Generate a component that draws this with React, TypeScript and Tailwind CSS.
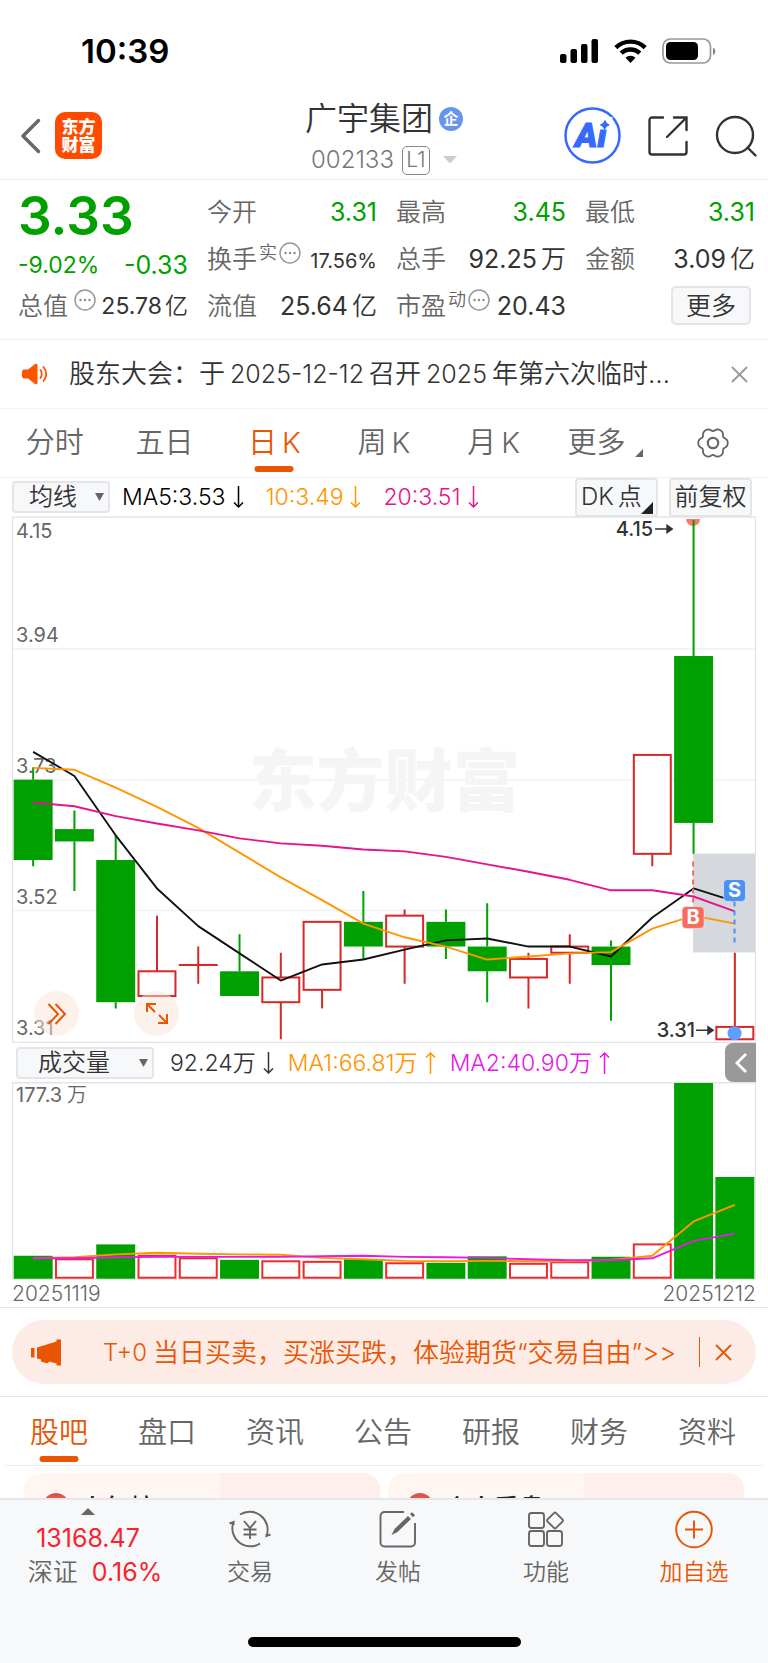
import React, { useState } from 'react';

const FONT = "font-['Inter','Noto_Sans_CJK_SC',sans-serif]";

interface Candle {
  open: number;
  close: number;
  high: number;
  low: number;
  up: boolean;
  volume: number;
}

const c = (open: number, close: number, high: number, low: number, up: boolean, volume: number): Candle => ({
  open, close, high, low, up, volume,
});

const CANDLES: Candle[] = [
  c(3.73, 3.60, 3.75, 3.59, false, 20.8),
  c(3.65, 3.63, 3.68, 3.55, false, 18.5),
  c(3.60, 3.37, 3.64, 3.36, false, 31.1),
  c(3.38, 3.42, 3.51, 3.38, true, 21.7),
  c(3.43, 3.43, 3.46, 3.40, true, 19.4),
  c(3.42, 3.38, 3.48, 3.38, false, 17.1),
  c(3.37, 3.41, 3.45, 3.31, true, 16.7),
  c(3.39, 3.50, 3.50, 3.36, true, 16.2),
  c(3.50, 3.46, 3.55, 3.44, false, 17.6),
  c(3.46, 3.51, 3.52, 3.40, true, 14.9),
  c(3.50, 3.46, 3.52, 3.44, false, 14.4),
  c(3.46, 3.42, 3.53, 3.37, false, 20.3),
  c(3.41, 3.44, 3.45, 3.36, true, 14.4),
  c(3.45, 3.46, 3.48, 3.40, true, 15.8),
  c(3.46, 3.43, 3.47, 3.34, false, 19.9),
  c(3.61, 3.77, 3.77, 3.59, true, 32),
  c(3.93, 3.66, 4.15, 3.61, false, 177.3),
  c(3.31, 3.33, 3.45, 3.31, true, 92.2),
];

const MA5 = [3.775, 3.736, 3.64, 3.554, 3.493, 3.449, 3.405, 3.431, 3.439, 3.455, 3.47, 3.473, 3.46, 3.46, 3.444, 3.507, 3.554, 3.533];
const MA10 = [3.749, 3.746, 3.717, 3.686, 3.652, 3.612, 3.572, 3.535, 3.497, 3.475, 3.46, 3.439, 3.444, 3.449, 3.451, 3.489, 3.51, 3.497];
const MA20 = [3.693, 3.687, 3.671, 3.659, 3.648, 3.635, 3.627, 3.623, 3.617, 3.614, 3.605, 3.593, 3.581, 3.568, 3.551, 3.551, 3.541, 3.517];
const VMA1 = [18.5, 19.4, 22.1, 23.5, 22.6, 22.1, 21.7, 18.9, 17.6, 16.2, 15.8, 16.2, 15.8, 15.8, 17.1, 20.8, 51.9, 66.8];
const VMA2 = [18.5, 18.5, 19.4, 19.8, 19.8, 19.8, 19.8, 20.3, 20.8, 19.8, 19.4, 18.9, 17.6, 16.7, 16.7, 18.5, 34.3, 40.9];

const GREEN = '#00a000';
const RED = '#d62828';

// Plot geometry, in viewBox units
const W = 745;
const PRICE_H = 528;
const VOL_H = 198;
const STEP = 744 / 18;
const BODY = 39;

const cx = (i: number) => 0.5 + STEP * (i + 0.5);
const priceY = (p: number) => 524 - (p - 3.31) * 619;
const volY = (v: number) => 197 - (v / 177.3) * 196;
const line = (data: number[], y: (v: number) => number) => data.map((v, i) => `${cx(i)},${y(v)}`).join(' ');

const gearPath = () => {
  const pts: string[] = [];
  for (let d = 0; d < 360; d += 4) {
    const a = (d * Math.PI) / 180;
    const r = 13.6 + 1.4 * Math.cos(6 * a) - 0.3 * Math.cos(12 * a);
    pts.push(`${(16 + r * Math.cos(a)).toFixed(2)} ${(16 + r * Math.sin(a)).toFixed(2)}`);
  }
  return `M${pts.join('L')}Z`;
};

const Arrow: React.FC<{ up?: boolean }> = ({ up }) => (
  <svg width="11" height="24" viewBox="0 0 11 24" fill="none" stroke="currentColor" strokeWidth="1.5" className={up ? 'rotate-180' : ''}>
    <path d="M5.5 1v21M1 17.5l4.5 4.5 4.5-4.5" />
  </svg>
);

const Dots = () => (
  <svg width="22" height="22" viewBox="0 0 22 22" className="shrink-0">
    <circle cx="11" cy="11" r="10" fill="none" stroke="#999" strokeWidth="1.5" />
    <circle cx="6.5" cy="11" r="1.2" fill="#888" />
    <circle cx="11" cy="11" r="1.2" fill="#888" />
    <circle cx="15.5" cy="11" r="1.2" fill="#888" />
  </svg>
);

const StatusBar = () => (
  <div className="flex h-[86px] items-center justify-between pl-[81px] pr-[52px] pt-4">
    <span className="text-[33px] font-semibold leading-8 text-black">10:39</span>
    <div className="flex items-center gap-[15px]">
      <svg width="39" height="24" viewBox="0 0 39 24">
        <rect x="0" y="15" width="6.5" height="9" rx="2" />
        <rect x="10.5" y="10" width="6.5" height="14" rx="2" />
        <rect x="21" y="5" width="6.5" height="19" rx="2" />
        <rect x="31.5" y="0" width="6.5" height="24" rx="2" />
      </svg>
      <svg width="33" height="24" viewBox="0 0 33 24" fill="none" stroke="#000" strokeWidth="4.4">
        <path d="M1.8 8.6a21 21 0 0 1 29.4 0" />
        <path d="M7.2 14.2a13.4 13.4 0 0 1 18.6 0" />
        <path d="M16.5 24l-5-5.2a7 7 0 0 1 10 0z" fill="#000" stroke="none" />
      </svg>
      <svg width="54" height="26" viewBox="0 0 54 26">
        <rect x="1" y="1" width="47.5" height="24" rx="7.5" fill="none" stroke="#999" strokeWidth="1.7" />
        <rect x="4" y="4" width="32" height="18" rx="4.5" />
        <path d="M51 9.5v7.5q2.400-1 2.400-3.700t-2.400-3.800z" fill="#888" />
      </svg>
    </div>
  </div>
);

const Header = () => (
  <header className="grid h-[94px] grid-cols-[1fr_auto_1fr] items-center border-b border-[#ededed] pt-[6px]">
    <div className="flex items-center gap-[14px] pl-[20px]">
      <button aria-label="返回">
        <svg width="21" height="36" viewBox="0 0 21 36" fill="none" stroke="#666" strokeWidth="3.4" strokeLinecap="round" strokeLinejoin="round">
          <path d="M18.5 2.500L3 18l15.500 15.500" />
        </svg>
      </button>
      <a href="#home" className="flex h-[47px] w-[47px] flex-col items-center justify-center rounded-[10px] bg-[#ff4a00] text-[17px] font-black leading-[18px] text-white">
        <span>东方</span>
        <span>财富</span>
      </a>
    </div>
    <div className="flex flex-col items-center gap-[5px] pt-[8px]">
      <div className="flex items-center gap-[6px]">
        <h1 className="text-[32px] leading-9 text-[#333]">广宇集团</h1>
        <span className="flex h-6 w-6 items-center justify-center rounded-full bg-[#6794ec] text-[15px] font-bold leading-4 text-white">企</span>
      </div>
      <div className="flex h-9 items-center gap-[8px]">
        <span className="text-[24px] leading-8 text-[#777]">002133</span>
        <span className="flex h-[29px] w-[28px] items-center justify-center rounded-[5px] border border-[#888] text-[21px] leading-6 text-[#777]">L1</span>
        <svg width="14" height="8" viewBox="0 0 14 8" className="ml-[5px]"><path d="M0 0h14L7 7.500z" fill="#ccc" /></svg>
      </div>
    </div>
    <div className="flex items-center justify-end gap-[27px] pr-[11px]">
      <button aria-label="Ai">
        <svg width="57" height="57" viewBox="0 0 57 57">
          <circle cx="28.500" cy="28.500" r="27" fill="none" stroke="#3569ff" strokeWidth="2.500" />
          <text x="11" y="40" fontSize="34" fontWeight="900" fontStyle="italic" fill="#3569ff" stroke="#3569ff" strokeWidth="1" fontFamily="Roboto">Ai</text>
          <path d="M34.500 10h14v12.500h-14z" fill="#fff" />
          <path d="M41 13.500q1 3.500 4.200 4.500q-3.500 1-4.600 4.300q-1-3.300-4.200-4.300q3.500-1 4.600-4.500z" fill="#3569ff" stroke="#3569ff" />
        </svg>
      </button>
      <button aria-label="分享">
        <svg width="40" height="40" viewBox="0 0 40 40" fill="none" stroke="#333" strokeWidth="2.400" strokeLinecap="round">
          <path d="M15 1.500H4A2.500 2.500 0 0 0 1.500 4v32A2.500 2.500 0 0 0 4 38.500h32a2.500 2.500 0 0 0 2.500-2.500V26M26 1.500h12.500V14M38 2L19 21" />
        </svg>
      </button>
      <button aria-label="搜索">
        <svg width="42" height="42" viewBox="0 0 42 42" fill="none" stroke="#333" strokeWidth="2.400" strokeLinecap="round">
          <circle cx="20" cy="20" r="18" />
          <path d="M32.500 32.500l8 8" />
        </svg>
      </button>
    </div>
  </header>
);

interface StatProps {
  label: string;
  value: string;
  unit?: string;
  sup?: string;
  dots?: boolean;
  green?: boolean;
  small?: boolean;
}

const Stat: React.FC<StatProps> = ({ label, value, unit, sup, dots, green, small }) => (
  <div className="flex h-[47px] items-center justify-between whitespace-nowrap">
    <span className="flex items-center text-[25px] leading-8 text-[#666]">
      {label}
      {sup && <sup className="top-0 pb-3 pl-[2px] text-[18px] leading-5">{sup}</sup>}
      {dots && <span className="pb-3 pl-[2px]"><Dots /></span>}
    </span>
    <span className={`flex items-center gap-[4px] font-normal leading-8 ${green ? 'text-[#00a000]' : 'text-[#333]'} ${small ? 'pt-1 text-[20px]' : 'text-[25px]'}`}>
      {value}
      {unit && <span className="font-[350]">{unit}</span>}
    </span>
  </div>
);

const Quote = () => (
  <section className="grid h-[160px] grid-cols-4 gap-x-[19px] border-b border-[#f0f0f0] pl-[18px] pr-[13px] pt-[8px]">
    <div>
      <div className="h-[58px] text-[53px] font-semibold leading-[56px] text-[#00a000]">3.33</div>
      <div className="flex h-[36px] items-center justify-between pt-[2px] font-normal leading-8 text-[#00a000]">
        <span className="text-[23px]">-9.02%</span>
        <span className="text-[25px]">-0.33</span>
      </div>
      <div className="flex h-[47px] items-center justify-between whitespace-nowrap text-[#333]">
        <span className="text-[25px] leading-8 text-[#666]">总值</span>
        <span className="pb-3"><Dots /></span>
        <span className="flex items-center gap-[3px] text-[23px] font-normal leading-8">25.78<span className="font-[350]">亿</span></span>
      </div>
    </div>
    <div>
      <Stat label="今开" value="3.31" green />
      <Stat label="换手" sup="实" dots value="17.56%" small />
      <Stat label="流值" value="25.64" unit="亿" />
    </div>
    <div>
      <Stat label="最高" value="3.45" green />
      <Stat label="总手" value="92.25" unit="万" />
      <Stat label="市盈" sup="动" dots value="20.43" />
    </div>
    <div>
      <Stat label="最低" value="3.31" green />
      <Stat label="金额" value="3.09" unit="亿" />
      <div className="flex h-[47px] items-center justify-end pr-1">
        <button className="flex h-[39px] w-[80px] items-center justify-center rounded-[5px] border-2 border-[#e4e5ea] bg-[#f7f8fa] text-[25px] leading-8 text-[#333]">更多</button>
      </div>
    </div>
  </section>
);

const Notice = () => (
  <section className="flex h-[69px] items-center border-b border-[#f3f3f3] pl-[22px] pr-[20px]">
    <svg width="26" height="22" viewBox="0 0 26 22" className="shrink-0">
      <path d="M2 6.500h4L13 1q2.500-1 2.500 1v18q0 2-2.500 1L6 15.500H2Q0 15.500 0 13.500v-5Q0 6.500 2 6.500z" fill="#ff5500" />
      <path d="M18.500 7q2.500 4 0 8M21.500 4q5.500 7 0 14" fill="none" stroke="#ff5500" strokeWidth="1.800" strokeLinecap="round" />
    </svg>
    <a href="#notice" className="flex flex-1 items-center gap-[5px] whitespace-nowrap pl-[21px] text-[26px] leading-9 text-[#333]">
      <span>股东大会：于</span>
      <span className="text-[25px]">2025-12-12</span>
      <span>召开</span>
      <span className="text-[25px]">2025</span>
      <span>年第六次临时…</span>
    </a>
    <button aria-label="关闭公告">
      <svg width="17" height="17" viewBox="0 0 17 17" stroke="#999" strokeWidth="1.800"><path d="M1 1l15 15M16 1L1 16" /></svg>
    </button>
  </section>
);

const PERIODS = ['分时', '五日', '日K', '周K', '月K'];

const PeriodTabs = () => {
  const [active, setActive] = useState('日K');
  return (
    <nav className="grid h-[69px] grid-cols-7 border-b border-[#f0f0f0] text-[29px] leading-9">
      {PERIODS.map((p) => (
        <button
          key={p}
          onClick={() => setActive(p)}
          className={`relative flex items-center justify-center gap-[5px] ${p === active ? 'text-[#ea5504]' : 'text-[#666]'}`}
        >
          {p.endsWith('K') ? <><span>{p[0]}</span><span>K</span></> : p}
          {p === active && <span className="absolute bottom-[5px] left-1/2 h-[6px] w-[39px] -translate-x-1/2 rounded-full bg-[#ea5504]" />}
        </button>
      ))}
      <button className="flex items-center justify-center gap-[10px] pl-[4px] text-[#666]">
        更多
        <svg width="8" height="8" viewBox="0 0 8 8" className="mt-5"><path d="M8 0v8H0z" fill="#666" /></svg>
      </button>
      <button aria-label="设置" className="flex items-center justify-center">
        <svg width="32" height="32" viewBox="0 0 32 32" fill="none" stroke="#666" strokeWidth="1.800">
          <path d={gearPath()} />
          <circle cx="16" cy="16" r="5.200" strokeWidth="2.200" />
        </svg>
      </button>
    </nav>
  );
};

interface PickerProps {
  label: string;
  options: string[];
  wide?: boolean;
}

const Picker: React.FC<PickerProps> = ({ label, options, wide }) => (
  <label className="relative flex items-center">
    <select
      aria-label={label}
      className={`h-[32px] appearance-none rounded-[4px] border-2 border-[#e4e5ea] bg-[#f7f8fa] text-[24px] leading-7 text-[#333] ${wide ? 'w-[138px] pl-[20px]' : 'w-[98px] pl-[15px]'}`}
    >
      {options.map((o) => <option key={o}>{o}</option>)}
    </select>
    <svg width="9" height="8" viewBox="0 0 9 8" className="pointer-events-none absolute right-[6px]"><path d="M0 0h9L4.500 8z" fill="#666" /></svg>
  </label>
);

const PriceHeader = () => (
  <div className="flex h-[38px] items-center pl-[12px] pr-[16px] text-[23px] leading-8">
    <Picker label="主图指标" options={['均线', 'BOLL']} />
    <span className="flex items-center gap-[7px] pl-[12px] text-black">MA5:3.53<Arrow /></span>
    <span className="flex items-center gap-[7px] pl-[22px] text-[#ff9500]">10:3.49<Arrow /></span>
    <span className="flex items-center gap-[7px] pl-[22px] text-[#e6148c]">20:3.51<Arrow /></span>
    <div className="ml-auto flex gap-[11px] text-[24px] text-[#333]">
      <button className="relative flex h-[39px] w-[83px] items-center gap-[4px] rounded-[4px] border-2 border-[#e4e5ea] bg-[#f7f8fa] pl-[4px]">
        <span>DK</span>
        <span>点</span>
        <svg width="12" height="12" viewBox="0 0 12 12" className="absolute bottom-[1px] right-[3px]"><path d="M12 0v12H0z" fill="#222" /></svg>
      </button>
      <button className="flex h-[39px] w-[83px] items-center justify-center rounded-[4px] border-2 border-[#e4e5ea] bg-[#f7f8fa]">前复权</button>
    </div>
  </div>
);

const CandleShape: React.FC<{ d: Candle; i: number }> = ({ d, i }) => {
  const x = cx(i);
  const top = priceY(Math.max(d.open, d.close));
  const bottom = priceY(Math.min(d.open, d.close));
  const color = d.up ? RED : GREEN;
  return (
    <g stroke={color} strokeWidth="2">
      <path d={`M${x} ${priceY(d.high)}V${top}M${x} ${bottom}V${priceY(d.low)}`} />
      {top === bottom && <path d={`M${x - BODY / 2} ${top}h${BODY}`} />}
      {d.up ? (
        <rect x={x - BODY / 2 + 1} y={top} width={BODY - 2} height={bottom - top} fill="#fff" />
      ) : (
        <rect x={x - BODY / 2} y={top} width={BODY} height={bottom - top} fill={color} stroke="none" />
      )}
    </g>
  );
};

const Mark: React.FC<{ x: number; y: number; color: string; text: string }> = ({ x, y, color, text }) => (
  <g>
    <rect x={x - 11} y={y - 11} width="22" height="22" rx="4" fill={color} stroke="#fff" strokeOpacity="0.5" />
    <text x={x} y={y + 7} textAnchor="middle" fontSize="20" fontWeight="700" fill="#fff">{text}</text>
  </g>
);

const PRICE_LABELS: [string, number][] = [['4.15', 22], ['3.94', 126], ['3.73', 257], ['3.52', 389], ['3.31', 520]];

const PriceChart = () => (
  <div className="relative px-[12px]">
    <svg viewBox={`0 0 ${W} ${PRICE_H}`} className="block h-auto w-full">
      <path d="M.5 133H744.500M.5 264H744.500M.5 395H744.500" stroke="#f0f1f6" strokeWidth="1.500" />
      <path d="M.5 1H744.500V527H.5z" fill="none" stroke="#e2e3e8" strokeWidth="1.300" />
      <text x="373" y="290" textAnchor="middle" fontSize="68" fontWeight="900" fill="#f5f5f6">东方财富</text>
      <rect x="682" y="338" width="62" height="99" fill="#d5d8dd" />
      <g fontSize="20" fontWeight="400" fill="#666">
        {PRICE_LABELS.map(([t, y]) => <text key={t} x="4" y={y}>{t}</text>)}
      </g>
      <path d="M675 3a7 7 0 0 0 14 0z" fill="#ff7a66" />
      {CANDLES.map((d, i) => <CandleShape key={i} d={d} i={i} />)}
      <g fill="none" strokeWidth="1.900" strokeLinejoin="round">
        <polyline points={line(MA5, priceY)} stroke="#111" />
        <polyline points={line(MA10, priceY)} stroke="#ff9500" />
        <polyline points={line(MA20, priceY)} stroke="#e6148c" />
      </g>
      <path d="M682 346V390" stroke="#f76c5e" strokeWidth="2" strokeDasharray="5 4" />
      <path d="M723.500 386V429" stroke="#4a93f5" strokeWidth="2" strokeDasharray="5 4" />
      <Mark x={682} y={402} color="#f76c5e" text="B" />
      <Mark x={723.5} y={375} color="#4a93f5" text="S" />
      <circle cx="723.500" cy="518" r="7" fill="#5c9fff" />
      <g fontSize="20" fontWeight="500" fill="#333" textAnchor="end">
        <text x="642" y="20">4.15</text>
        <text x="684" y="522">3.31</text>
      </g>
      <g stroke="#333" strokeWidth="1.600" fill="#333">
        <path d="M644 13h12M656 9.500l5 3.500-5 3.500z" />
        <path d="M685 515h12M697 511.500l5 3.500-5 3.500z" />
      </g>
    </svg>
    <button aria-label="展开" className="absolute bottom-[7px] left-[34px] flex h-[45px] w-[45px] items-center justify-center rounded-full bg-[#fbe4d8]/50">
      <svg width="20" height="22" viewBox="0 0 20 22" fill="none" stroke="#ea5504" strokeWidth="2">
        <path d="M1.500 1l9.500 10-9.500 10M8.500 1L18 11 8.500 21" />
      </svg>
    </button>
    <button aria-label="全屏" className="absolute bottom-[7px] left-[134px] flex h-[45px] w-[45px] items-center justify-center rounded-full bg-[#fbe4d8]/50">
      <svg width="24" height="24" viewBox="0 0 24 24" fill="none" stroke="#ea5504" strokeWidth="2">
        <path d="M2 10V2h9M2 2l8 8M14 13l8 8M22 12v9h-9" />
      </svg>
    </button>
  </div>
);

const VolumeHeader = () => (
  <div className="flex h-[39px] items-center pl-[16px] pr-[12px] text-[23px] leading-8">
    <Picker label="副图指标" options={['成交量', 'MACD']} wide />
    <span className="flex items-center gap-[7px] pl-[16px] text-[#333]">92.24万<Arrow /></span>
    <span className="flex items-center gap-[7px] pl-[14px] text-[#ff9500]">MA1:66.81万<Arrow up /></span>
    <span className="flex items-center gap-[7px] pl-[14px] text-[#e619e6]">MA2:40.90万<Arrow up /></span>
    <button aria-label="收起" className="ml-auto flex h-[39px] w-[31px] items-center justify-center rounded-l-lg bg-[#999]">
      <svg width="12" height="20" viewBox="0 0 12 20" fill="none" stroke="#fff" strokeWidth="2.800"><path d="M11 1L2 10l9 9" /></svg>
    </button>
  </div>
);

const VolumeChart = () => (
  <div className="border-b border-[#e6e6e9] px-[12px]">
    <svg viewBox={`0 0 ${W} ${VOL_H}`} className="block h-auto w-full">
      <path d="M.5 .75H744.500V197.500H.5z" fill="none" stroke="#e2e3e8" strokeWidth="1.300" />
      <g fontSize="20" fontWeight="400" fill="#666">
        <text x="4" y="20">177.3</text>
        <text x="55" y="20" fontWeight="350">万</text>
      </g>
      {CANDLES.map((d, i) => {
        const y = volY(d.volume);
        const rising = i > 0 && d.close >= CANDLES[i - 1].close;
        return rising ? (
          <rect key={i} x={cx(i) - BODY / 2 + 1} y={y + 1} width={BODY - 2} height={195 - y} fill="#fff" stroke="#f02a2a" strokeWidth="2" />
        ) : (
          <rect key={i} x={cx(i) - BODY / 2} y={y} width={BODY} height={197 - y} fill={GREEN} />
        );
      })}
      <g fill="none" strokeWidth="1.900" strokeLinejoin="round">
        <polyline points={line(VMA1, volY)} stroke="#ff9500" />
        <polyline points={line(VMA2, volY)} stroke="#e619e6" />
      </g>
    </svg>
    <div className="flex h-[27px] items-center justify-between text-[21px] leading-6 text-[#666]">
      <span>20251119</span>
      <span>20251212</span>
    </div>
  </div>
);

const Promo = () => (
  <section className="border-b border-[#e6e6ec] px-[12px] pb-3 pt-3">
    <div className="flex h-[64px] items-center rounded-full bg-[#fdece5] pl-[19px] pr-[24px] text-[#ea5504]">
      <svg width="31" height="27" viewBox="0 0 31 27" fill="#ea5504" className="shrink-0">
        <path d="M0 9h3.500v9.500H0zM6 8.500L25.500 2.500V0.500H30v26h-4.500V24.500L18 22.500q-1 2.500-3 1.500l-4-1q-1.500-.5-1-2.500L6 19.500z" />
      </svg>
      <a href="#promo" className="flex flex-1 items-center gap-[6px] whitespace-nowrap pl-[41px] pt-[2px] text-[26px] leading-9">
        <span className="text-[24px]">T+0</span>
        <span>当日买卖，买涨买跌，体验期货“交易自由”&gt;&gt;</span>
      </a>
      <span className="h-[30px] w-px bg-[#ea5504]" />
      <button aria-label="关闭推广" className="pl-[15px]">
        <svg width="17" height="17" viewBox="0 0 17 17" stroke="#ea5504" strokeWidth="1.800"><path d="M1 1l15 15M16 1L1 16" /></svg>
      </button>
    </div>
  </section>
);

const SECTIONS = ['股吧', '盘口', '资讯', '公告', '研报', '财务', '资料'];

const SectionTabs = () => {
  const [active, setActive] = useState('股吧');
  return (
    <nav className="mx-[6px] flex h-[69px] justify-between border-b border-[#ececee] pl-[24px] pr-[26px]">
      {SECTIONS.map((s) => (
        <button
          key={s}
          onClick={() => setActive(s)}
          className={`relative flex items-center pt-[3px] text-[29px] leading-9 ${s === active ? 'text-[#ea5504]' : 'text-[#666]'}`}
        >
          {s}
          {s === active && <span className="absolute bottom-[3px] left-1/2 h-[6px] w-[39px] -translate-x-1/2 rounded-full bg-[#ea5504]" />}
        </button>
      ))}
    </nav>
  );
};

const Cards = () => (
  <div className="grid h-[32px] grid-cols-2 gap-[8px] overflow-hidden px-[24px] pt-[7px]">
    {['人气榜', '个人看盘'].map((t) => (
      <a key={t} href="#feed" className="flex h-[80px] items-start rounded-2xl bg-linear-to-r from-[#fff6f2] from-55% to-[#feefec] to-55% pl-[19px] pt-[20px]">
        <span className="h-[26px] w-[26px] shrink-0 rounded-full bg-[#e0554b]" />
        <span className="pl-[11px] pt-[1px] text-[25px] font-medium leading-7 text-[#222]">{t}</span>
      </a>
    ))}
  </div>
);

const NavItem: React.FC<{ label: string; accent?: boolean; children: React.ReactNode }> = ({ label, accent, children }) => (
  <button className={`flex flex-1 flex-col items-center gap-[7px] pt-[9px] ${accent ? 'text-[#ea5504]' : 'text-[#666]'}`}>
    <svg width="44" height="40" viewBox="0 0 44 40" fill="none" stroke="currentColor" strokeWidth="1.900">{children}</svg>
    <span className="text-[23px] leading-8">{label}</span>
  </button>
);

const BottomBar = () => (
  <footer className="flex h-[166px] flex-col justify-between border-t-2 border-[#e6e7ea] bg-[#f7f8fa] pb-[17px]">
    <div className="flex items-start">
      <button className="flex w-[176px] flex-col items-center pt-[8px] text-[25px] font-normal leading-[34px] text-[#f8232c]">
        <svg width="14" height="7" viewBox="0 0 14 7"><path d="M7 0l7 7H0z" fill="#666" /></svg>
        <span className="pt-[6px]">13168.47</span>
        <span className="flex gap-[14px] pl-[14px]"><span className="font-[350] text-[#666]">深证</span>0.16%</span>
      </button>
      <NavItem label="交易">
        <path d="M12 5.500A18 18 0 0 1 38.500 27l4-1.500M38.500 28V25M32 34.500A18 18 0 0 1 5.500 13L1.500 14.500M5.500 13V16" />
        <path d="M16 12l6 7 6-7M15.500 20.500h13M15.500 25.500h13M22 19v11" />
      </NavItem>
      <NavItem label="发帖">
        <path d="M28 3H8.500a4 4 0 0 0-4 4v26.500a4 4 0 0 0 4 4H35a4 4 0 0 0 4-4V14" />
        <path d="M15.500 26l3-6L32 7l3 3-13.500 13zM34 5l2-1.800 3 2.800-2 2.200z" fill="currentColor" stroke="none" />
      </NavItem>
      <NavItem label="功能">
        <rect x="5" y="4" width="15" height="15" rx="2.500" />
        <rect x="5" y="22" width="15" height="15" rx="2.500" />
        <rect x="23" y="22" width="15" height="15" rx="2.500" />
        <rect x="25" y="5.500" width="12" height="12" rx="1.500" transform="rotate(45 31 11.500)" />
      </NavItem>
      <NavItem label="加自选" accent>
        <circle cx="22" cy="20.500" r="17.800" />
        <path d="M13 20.500h18M22 11.500v18" />
      </NavItem>
    </div>
    <div className="mx-auto h-[10px] w-[273px] rounded-full bg-black" />
  </footer>
);

export default function App() {
  return (
    <div className={`min-h-screen w-full bg-white font-[350] ${FONT}`}>
      <StatusBar />
      <Header />
      <Quote />
      <Notice />
      <PeriodTabs />
      <PriceHeader />
      <PriceChart />
      <VolumeHeader />
      <VolumeChart />
      <Promo />
      <SectionTabs />
      <Cards />
      <BottomBar />
    </div>
  );
}
